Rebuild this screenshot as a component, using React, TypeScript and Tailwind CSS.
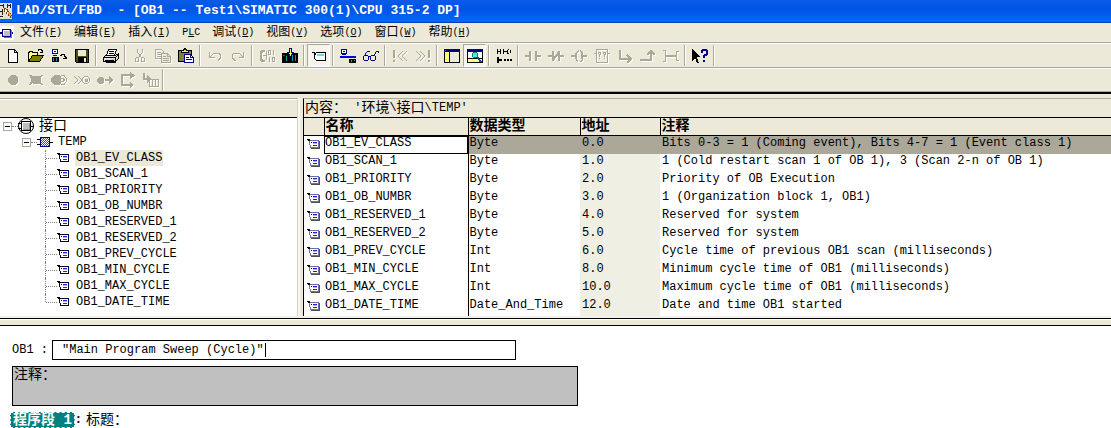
import type { ReactNode } from "react";
import clsx from "clsx";

const menus = [
  { label: "文件", mnemonic: "F" },
  { label: "编辑", mnemonic: "E" },
  { label: "插入", mnemonic: "I" },
  { label: "PLC" },
  { label: "调试", mnemonic: "D" },
  { label: "视图", mnemonic: "V" },
  { label: "选项", mnemonic: "O" },
  { label: "窗口", mnemonic: "W" },
  { label: "帮助", mnemonic: "H" },
];

const variables = [
  {
    name: "OB1_EV_CLASS",
    type: "Byte",
    address: "0.0",
    comment: "Bits 0-3 = 1 (Coming event), Bits 4-7 = 1 (Event class 1)",
  },
  {
    name: "OB1_SCAN_1",
    type: "Byte",
    address: "1.0",
    comment: "1 (Cold restart scan 1 of OB 1), 3 (Scan 2-n of OB 1)",
  },
  { name: "OB1_PRIORITY", type: "Byte", address: "2.0", comment: "Priority of OB Execution" },
  { name: "OB1_OB_NUMBR", type: "Byte", address: "3.0", comment: "1 (Organization block 1, OB1)" },
  { name: "OB1_RESERVED_1", type: "Byte", address: "4.0", comment: "Reserved for system" },
  { name: "OB1_RESERVED_2", type: "Byte", address: "5.0", comment: "Reserved for system" },
  {
    name: "OB1_PREV_CYCLE",
    type: "Int",
    address: "6.0",
    comment: "Cycle time of previous OB1 scan (milliseconds)",
  },
  {
    name: "OB1_MIN_CYCLE",
    type: "Int",
    address: "8.0",
    comment: "Minimum cycle time of OB1 (milliseconds)",
  },
  {
    name: "OB1_MAX_CYCLE",
    type: "Int",
    address: "10.0",
    comment: "Maximum cycle time of OB1 (milliseconds)",
  },
  {
    name: "OB1_DATE_TIME",
    type: "Date_And_Time",
    address: "12.0",
    comment: "Date and time OB1 started",
  },
];

type Tool = { label: string; icon: ReactNode; disabled?: boolean; pressed?: boolean };

const G = "#aca899";

// Icons are drawn on a 16x16 grid, one unit per pixel.
const mainTools: Tool[][] = [
  [
    {
      label: "新建",
      icon: (
        <>
          <path d="M3.5 1.5h6l3 3v10h-9z" fill="#fff" stroke="#000" />
          <path d="M9.5 1.5v3h3" fill="none" stroke="#000" />
        </>
      ),
    },
    {
      label: "打开",
      icon: (
        <>
          <path d="M.5 13.5v-9h1v-1h3v1h5v3" fill="#ffff80" stroke="#000" />
          <path d="M.5 13.5l4-6h11l-4 6z" fill="#808000" stroke="#000" />
          <path d="M9.500 2.500h1v-1h3v1h1v2M12 4.500h3" fill="none" stroke="#000" />
        </>
      ),
    },
    {
      label: "在线打开",
      icon: (
        <>
          <path d="M1 1h6v5H1z" fill="#0000c0" />
          <path d="M2 2h4v3H2z" fill="#fff" />
          <path d="M3 3h2v1H3zM2 7h4v1H2z" fill="#0000c0" />
          <path d="M1 9h7v5H1z" fill="#000" />
          <path d="M2 10h1v3H2zM5 10h1v3H5z" fill="#00a0a0" />
          <path d="M9 7.500h1.500v-1h3v1.500h1v3M12 10.500h4M14 9.500h2" fill="none" stroke="#000" />
        </>
      ),
    },
    {
      label: "保存",
      icon: (
        <>
          <path d="M1.500 1.500h13v13h-12l-1-1z" fill="#505000" stroke="#000" />
          <path d="M4 2h8v6H4z" fill="#ece9d8" />
          <path d="M4 9h9v5H4z" fill="#000" />
          <path d="M10 10h2v4h-2z" fill="#ece9d8" />
        </>
      ),
    },
  ],
  [
    {
      label: "打印",
      icon: (
        <>
          <path d="M5.500 1.500h8l-2 6h-8z" fill="#fff" stroke="#000" />
          <path d="M6 3.500h5M5.500 5.500h5" stroke="#000" />
          <path d="M2.500 7.500h10l3-2v5l-3 3h-12v-4z" fill="#e0e0e0" stroke="#000" />
          <path d="M.5 9.500h12v4M12.500 9.500l3-3M2 12.500h9" fill="none" stroke="#000" />
          <path d="M8 11h3v1H8z" fill="#e0e000" />
          <path d="M2.500 14.500h10" stroke="#000" />
        </>
      ),
    },
  ],
  [
    {
      label: "剪切",
      disabled: true,
      icon: (
        <g fill="none" stroke={G}>
          <path d="M5.500 1v3l4 6M10.500 1v3l-4 6" />
          <path d="M4.500 9.500h2v4h-3v-3zM9.500 9.500h2l1 1v3h-3z" />
        </g>
      ),
    },
    {
      label: "复制",
      disabled: true,
      icon: (
        <g fill="none" stroke={G}>
          <path d="M.5 1.500h6l2 2v7h-8zM2 4.500h4M2 6.500h4M2 8.500h4" />
          <path d="M6.500 5.500h6l3 3v6h-9z" fill="#ece9d8" />
          <path d="M8 8.500h3M8 10.500h6M8 12.500h6M12.500 5.500v3h3" />
        </g>
      ),
    },
    {
      label: "粘贴",
      icon: (
        <>
          <path d="M.5 2.500h13v11H.5z" fill="#808040" stroke="#000" />
          <path d="M3.500 4.500v-2h2l1-2h1l1 2h2v2z" fill="#e8e080" stroke="#000" />
          <path d="M6.500 6.500h6l3 3v5h-9z" fill="#fff" stroke="#000080" />
          <path d="M8 9.500h3M8 11.500h6M12.500 6.500v3h3" fill="none" stroke="#000080" />
        </>
      ),
    },
  ],
  [
    {
      label: "撤消",
      disabled: true,
      icon: (
        <path d="M2.500 4v5.500h5M3 9l4-4h5l1.500 2v3l-2 2h-1" fill="none" stroke={G} />
      ),
    },
    {
      label: "重做",
      disabled: true,
      icon: (
        <path d="M13.500 4v5.500h-5M13 9L9 5H4L2.500 7v3l2 2h1" fill="none" stroke={G} />
      ),
    },
  ],
  [
    {
      label: "比较",
      disabled: true,
      icon: (
        <g fill="none" stroke={G}>
          <path d="M6 3H3v1H2v8h1v1h3" strokeWidth="2" />
          <path d="M4 7.500h4M7.500 3v9" />
          <path d="M9.500 2.500h2v4h-2zM14.500 2v5M10.500 9v5M13.500 9.500h2v4h-2z" />
        </g>
      ),
    },
    {
      label: "下载",
      icon: (
        <>
          <path d="M0 5h16v10H0z" fill="#000" />
          <path d="M1 7h2v1H1z" fill="#f00" />
          <path d="M4 8h1v5H4zM10 7h1v6h-1zM13 7h1v6h-1z" fill="#00a0a0" />
          <path d="M7.500.5h2v4h2l-3 4-3-4h2z" fill="#ffff40" stroke="#000080" />
        </>
      ),
    },
  ],
  [
    {
      label: "符号表示",
      pressed: true,
      icon: (
        <>
          <path d="M1 4.500h2l2 2M5.500 4.500h9v8h-9l-2-2v-4z" fill="#fff" stroke="#000" />
          <path d="M6 6h7v2H6z" fill="#60e0e0" />
        </>
      ),
    },
  ],
  [
    {
      label: "在线",
      icon: (
        <>
          <path d="M1.500 1.500h5v4h-5z" fill="#fff" stroke="#000080" />
          <path d="M3 3h2v1H3z" fill="#0000c0" />
          <path d="M2 6h4v1H2z" fill="#000080" />
          <path d="M0 8h16v2H0z" fill="#0000e0" />
          <path d="M9 11h7v4H9z" fill="#000" />
          <path d="M11 12h1v2h-1zM14 12h1v1h-1z" fill="#00b0a0" />
        </>
      ),
    },
    {
      label: "监视",
      icon: (
        <g fill="none" stroke="#000080">
          <path d="M1.500 7.500h3l1 1v3l-1 1h-3l-1-1v-3zM8.500 7.500h3l1 1v3l-1 1h-3l-1-1v-3z" />
          <path d="M5.500 8.500h2M2.500 7V5.500l3-2.500h1M11.500 7l2-4h1.500v2" />
        </g>
      ),
    },
  ],
  [
    {
      label: "上一个错误",
      disabled: true,
      icon: (
        <g fill="none" stroke={G}>
          <path d="M2 2v8M2 12v2" strokeWidth="2" />
          <path d="M11 3L6 8l5 5M15 3l-5 5 5 5" />
        </g>
      ),
    },
    {
      label: "下一个错误",
      disabled: true,
      icon: (
        <g fill="none" stroke={G}>
          <path d="M14 2v8M14 12v2" strokeWidth="2" />
          <path d="M5 3l5 5-5 5M1 3l5 5-5 5" />
        </g>
      ),
    },
  ],
  [
    {
      label: "总览",
      icon: (
        <>
          <path d="M.5 1.500h15v13H.5z" fill="#ece9d8" stroke="#000" />
          <path d="M0 1h16v3H0z" fill="#000080" />
          <path d="M1 4h4v10H1z" fill="#ffff80" />
          <path d="M5 4h1v10H5z" fill="#000" />
          <path d="M1 2h1v1H1z" fill="#f00" />
        </>
      ),
    },
    {
      label: "详细资料",
      pressed: true,
      icon: (
        <>
          <path d="M.5 1.500h15v13H.5z" fill="#fff" stroke="#000" />
          <path d="M0 1h16v3H0z" fill="#000080" />
          <path d="M1 11h14v3H1z" fill="#ffff80" />
          <path d="M1 10h14v1H1z" fill="#000" />
          <path d="M6.500 4.500h3l1 1v3l-1 1h-3l-1-1v-3z" fill="#60e0e0" stroke="#008080" />
          <path d="M10 9l4 5" stroke="#0040c0" strokeWidth="2" />
        </>
      ),
    },
  ],
  [
    {
      label: "新程序段",
      icon: (
        <g fill="none" stroke="#000">
          <path d="M1.500 1v5M1 3.500h4M4.500 1v5M7.500 1v5M7 3.500h4M11.500 1.500v4M12 1.500h1M12 5.500h1M14.500 2v3" />
          <path d="M2 9v6M1 12h5" strokeWidth="2" />
          <path d="M8 12h2M11 12h2M14 12h2" strokeWidth="2" />
        </g>
      ),
    },
  ],
  [
    {
      label: "常开触点",
      disabled: true,
      icon: (
        <path d="M0 8h5M5 3v10M11 3v10M11 8h5" fill="none" stroke={G} strokeWidth="2" />
      ),
    },
    {
      label: "常闭触点",
      disabled: true,
      icon: (
        <path d="M0 8h5M5 3v10M11 3v10M11 8h5M5 12l6-8" fill="none" stroke={G} strokeWidth="2" />
      ),
    },
    {
      label: "线圈",
      disabled: true,
      icon: (
        <g fill="none" stroke={G}>
          <path d="M0 8h4M12 8h4" strokeWidth="2" />
          <path d="M7 2v1H6v1H5v8h1v1h1M9 2v1h1v1h1v8h-1v1H9" />
          <path d="M5 5v6M11 5v6" strokeWidth="2" />
        </g>
      ),
    },
    {
      label: "空框",
      disabled: true,
      icon: (
        <g fill="none" stroke={G}>
          <path d="M2.500 1.500h11v13h-11zM0 5.500h2M14 5.500h2" />
          <path d="M4.500 6v-1.500h2v2h-1V9M5 10.500h1M9.500 6v-1.500h2v2h-1V9M10 10.500h1" />
        </g>
      ),
    },
    {
      label: "打开分支",
      disabled: true,
      icon: (
        <g fill="none" stroke={G}>
          <path d="M3 2v9h10" strokeWidth="2" />
          <path d="M10 7l4 4-4 4" strokeWidth="2" />
        </g>
      ),
    },
    {
      label: "关闭分支",
      disabled: true,
      icon: (
        <g fill="none" stroke={G}>
          <path d="M0 12h11V4" strokeWidth="2" />
          <path d="M7 7l4-4 4 4" strokeWidth="2" />
        </g>
      ),
    },
    {
      label: "连接",
      disabled: true,
      icon: (
        <g fill="none" stroke={G}>
          <path d="M0 2.500h2.500v11H0M16 3.500h-2.500v9H16" />
          <path d="M3 8h10" strokeWidth="2" />
        </g>
      ),
    },
  ],
  [
    {
      label: "帮助",
      icon: (
        <>
          <path d="M0 1v12l3-3 2 5h2L5 9h4z" fill="#000" />
          <path d="M10 5V3l1-1h3l1 1v3l-3 2v2M12 12v2" fill="none" stroke="#000080" strokeWidth="2" />
        </>
      ),
    },
  ],
];

const debugTools: Tool[] = [
  {
    label: "设置断点",
    disabled: true,
    icon: <path d="M6 3h4l3 3v4l-3 3H6l-3-3V6z" fill={G} />,
  },
  {
    label: "删除断点",
    disabled: true,
    icon: (
      <g fill={G}>
        <path d="M5 4h6l2 2v4l-2 2H5l-2-2V6z" />
        <path d="M1 3h2l4 4-4 6H1l3-5zM15 3h-2L9 7l4 6h2l-3-5z" />
      </g>
    ),
  },
  {
    label: "激活断点",
    disabled: true,
    icon: (
      <g fill={G}>
        <path d="M3 3h5l2 2v6l-2 2H3l-3-3V6z" />
        <path d="M10 3.500h3l2.500 3v3l-2.500 3h-3M10 6.500h2l1 1v1l-1 1h-2" fill="none" stroke={G} />
      </g>
    ),
  },
  {
    label: "下一个断点",
    disabled: true,
    icon: (
      <g fill="none" stroke={G}>
        <path d="M0 4l4 4-4 4M4 4l4 4-4 4M10.500 4.500h3l2 2v3l-2 2h-3l-2-2v-3z" />
        <path d="M11 7h2v2h-2z" fill={G} />
      </g>
    ),
  },
  {
    label: "继续",
    disabled: true,
    icon: (
      <g fill={G}>
        <path d="M2 5h3l2 2v3l-2 2H2l-2-2V7z" />
        <path d="M8 7h4V4l4 4-4 4V9H8z" />
      </g>
    ),
  },
  {
    label: "下一语句",
    disabled: true,
    icon: (
      <g fill={G}>
        <path d="M1 2h9V0l5 3.500L10 7V4H3v8h7v-2l4 3-4 3v-2H1z" />
      </g>
    ),
  },
  {
    label: "执行调用",
    disabled: true,
    icon: (
      <g fill="none" stroke={G}>
        <path d="M1 1v6h4" strokeWidth="2" />
        <path d="M4 3l4 4-4 4z" fill={G} />
        <path d="M6.500 7.500h9v7h-9zM9.500 7v7M12.500 7v7" />
      </g>
    ),
  },
];

function ToolButton({ label, icon, disabled, pressed }: Tool) {
  return (
    <button
      type="button"
      aria-label={label}
      aria-pressed={pressed}
      disabled={disabled}
      className={clsx(
        "flex h-[23px] w-[23px] flex-none items-center justify-center",
        pressed && "border border-[#aca899] border-r-white border-b-white bg-[#f6f4ec]",
      )}
    >
      <svg
        viewBox="0 0 16 16"
        shapeRendering="crispEdges"
        className={clsx("h-4 w-4 flex-none", disabled && "drop-shadow-[1px_1px_0_#fff]")}
      >
        {icon}
      </svg>
    </button>
  );
}

function Separator() {
  return <div className="mx-[2px] h-[21px] w-[2px] flex-none border-r border-l border-l-[#aca899] border-r-white" />;
}

function Zh({ children }: { children: ReactNode }) {
  return <span className="text-[14px]">{children}</span>;
}

function VariableIcon({ shaded = false }: { shaded?: boolean }) {
  return (
    <svg viewBox="0 0 14 12" shapeRendering="crispEdges" className="block h-3 w-[14px] flex-none">
      {shaded && <path d="M4 10h8V3h1v8H4z" fill="#505050" />}
      <path d="M0 1h3v1H0zM1 2h2v1H1z" fill="#000" />
      <path
        d="M3.500 2.500h8v7h-8v-2l-1-1v-3z"
        fill="#fff"
        stroke={shaded ? "#7070a8" : "#000040"}
      />
      <path d="M6 4h4v1H6zM6 7h4v1H6z" fill="#2020e0" />
      <path d="M6 5h4v1H6z" fill="#b0b0f0" />
      <path d="M4 4h1v1H4z" fill="#000" />
    </svg>
  );
}

function BlockIcon() {
  return (
    <svg viewBox="0 0 16 16" className="h-4 w-4 flex-none">
      <circle cx="8" cy="8" r="7.500" fill="#fff" stroke="#000" />
      <g shapeRendering="crispEdges">
        <path d="M0 5.500h4M0 10.500h4M12 8.500h4" stroke="#000" />
        <path d="M3 3h10v10H3z" fill="#000" />
        <path d="M4 4h8v8H4z" fill="#fff" />
        <path d="M5 5h7v7H5z" fill="#909090" />
        <path d="M5 5h6v6H5z" fill="#c0c0c0" />
      </g>
    </svg>
  );
}

function TempIcon() {
  return (
    <svg viewBox="0 0 16 16" shapeRendering="crispEdges" className="h-4 w-4 flex-none">
      <path d="M0 5.500h3M0 10.500h3M13 8.500h3" stroke="#000" />
      <path d="M3.500 3.500h9v9h-9z" fill="#fff" stroke="#000080" />
      <path d="M4 4.500h8M4 6.500h8M4 8.500h8M4 10.500h8" stroke="#4040c0" strokeDasharray="1 1" />
      <path d="M5 5.500h7M5 7.500h7M5 9.500h7M5 11.500h7" stroke="#4040c0" strokeDasharray="1 1" />
    </svg>
  );
}

function Collapse({ label }: { label: string }) {
  return (
    <button
      type="button"
      aria-label={label}
      className="flex h-[9px] w-[9px] flex-none items-center justify-center border border-[#aca899] bg-white"
    >
      <span className="h-px w-[5px] bg-black" />
    </button>
  );
}

function TitleBar() {
  return (
    <header className="flex h-[23px] items-center border-b border-[#0040b0] bg-linear-to-b from-[#0a5be8] via-[#0054e3] via-40% to-[#0068ff]">
      <svg viewBox="0 0 13 16" shapeRendering="crispEdges" className="h-4 w-[13px] flex-none">
        <path d="M0 0h12v16H0z" fill="#e4e0d4" />
        <path d="M0 2.500h3M3.500 1v4M7.500 1v4M8 2.500h2M10.500 1v4M0 8.500h2M2.500 6v6M0 13.500h3" stroke="#202020" />
        <path d="M4 5h2v1h2v2h1v2h2v2h1v3h-2v-2H8v-2H6V9H4z" fill="#6b3a10" />
        <path d="M5 6h1v1h1v2h1v2H7V9H5z" fill="#fff" />
        <path d="M8 9h2v2h1v2h1v2h-1v-2H9v-2H8z" fill="#f0a830" />
      </svg>
      <h1 className="ml-[3px] text-[13px] leading-4 font-bold whitespace-pre text-white">
        {"LAD/STL/FBD  - [OB1 -- Test1\\SIMATIC 300(1)\\CPU 315-2 DP]"}
      </h1>
    </header>
  );
}

function MenuBar() {
  return (
    <nav className="flex h-5 items-center border-b border-[#aca899]">
      <svg viewBox="0 0 14 14" shapeRendering="crispEdges" className="h-[14px] w-[14px] flex-none">
        <path d="M0 0h14v14H0z" fill="#fff" />
        <path d="M0 6h13v2H0z" fill="#000080" />
        <path d="M2.500 3.500h8v7h-8z" fill="#c0c0c0" stroke="#000080" />
        <path d="M3 4h6v1H4v4H3z" fill="#fff" />
        <path d="M11 4h1v8H4v-1h7z" fill="#808080" />
      </svg>
      <div className="ml-[6px] flex items-center gap-3">
        {menus.map(({ label, mnemonic }) => (
          <button key={label} type="button" className="flex items-center leading-4 whitespace-nowrap">
            {mnemonic ? (
              <>
                <span className="text-[12px]">{label}</span>
                <span className="text-[10px]">
                  (<u>{mnemonic}</u>)
                </span>
              </>
            ) : (
              <span className="text-[10px]">
                P<u>L</u>C
              </span>
            )}
          </button>
        ))}
      </div>
    </nav>
  );
}

function Toolbars() {
  return (
    <>
      <div className="flex h-[25px] items-center border-t border-b border-t-white border-b-[#aca899] pl-px">
        {mainTools.map((group, index) => (
          <div key={index} className="flex items-center">
            {group.map((tool) => (
              <ToolButton key={tool.label} {...tool} />
            ))}
            <Separator />
          </div>
        ))}
      </div>
      <div className="flex h-6 items-center border-t border-b border-t-white border-b-[#aca899] pl-px">
        {debugTools.map((tool) => (
          <ToolButton key={tool.label} {...tool} />
        ))}
        <div className="h-full w-[2px] border-r border-l border-l-[#aca899] border-r-white" />
      </div>
    </>
  );
}

function InterfaceTree() {
  return (
    <ul className="flex-1 bg-white leading-4">
      <li>
        <div className="flex h-4 items-center pl-[3px]">
          <Collapse label="折叠接口" />
          <span className="w-[6px] border-t border-dotted border-[#808080]" />
          <BlockIcon />
          <span className="ml-[5px] flex">
            <Zh>接口</Zh>
          </span>
        </div>
        <ul>
          <li>
            <div className="flex h-4 items-center pl-[22px]">
              <Collapse label="折叠 TEMP" />
              <span className="w-[6px] border-t border-dotted border-[#808080]" />
              <TempIcon />
              <span className="ml-[5px]">TEMP</span>
            </div>
            <ul>
              {variables.map(({ name }, index) => (
                <li key={name} className="flex h-4 items-center pl-[45px]">
                  <span
                    className={clsx(
                      "border-l border-dotted border-[#808080]",
                      index === variables.length - 1 ? "h-2 self-start" : "h-4",
                    )}
                  />
                  <span className="w-[11px] border-t border-dotted border-[#808080]" />
                  <VariableIcon />
                  <span className={clsx("ml-1 px-px", index === 0 && "bg-[#ece9d8]")}>{name}</span>
                </li>
              ))}
            </ul>
          </li>
        </ul>
      </li>
    </ul>
  );
}

function VariableTable() {
  return (
    <table className="w-full table-fixed border-collapse bg-white text-left leading-[14px]">
      <colgroup>
        <col className="w-[20px]" />
        <col className="w-[144px]" />
        <col className="w-[112px]" />
        <col className="w-[80px]" />
        <col />
      </colgroup>
      <thead className="bg-[#ece9d8] text-[14px] leading-4">
        <tr className="h-[17px] border-b border-black">
          <th aria-label="图标" className="border-r border-black p-0" />
          <th className="border-r border-black py-0 pl-px">名称</th>
          <th className="border-r border-black py-0 pl-px">数据类型</th>
          <th className="border-r border-black py-0 pl-px">地址</th>
          <th className="py-0 pl-px">注释</th>
        </tr>
      </thead>
      <tbody>
        {variables.map(({ name, type, address, comment }, index) => {
          const selected = index === 0;
          return (
            <tr key={name} className={clsx("h-[18px]", selected && "bg-[#aca899]")}>
              <td className="bg-white pt-0 pb-[2px] pl-[3px]">
                <VariableIcon shaded />
              </td>
              <td className="border-r border-black bg-white p-0">
                {selected ? (
                  <input
                    aria-label="名称"
                    defaultValue={name}
                    className="block h-[18px] w-full border border-black bg-white pb-[4px] outline-none"
                  />
                ) : (
                  <span className="block pb-[4px] pl-px">{name}</span>
                )}
              </td>
              <td className="pt-0 pb-[4px] pl-px">{type}</td>
              <td className={clsx("pt-0 pb-[4px] pl-[2px]", !selected && "bg-[#f0efe3]")}>{address}</td>
              <td className="pt-0 pb-[4px] pl-[2px] whitespace-nowrap">{comment}</td>
            </tr>
          );
        })}
      </tbody>
    </table>
  );
}

function BlockEditor() {
  return (
    <main className="bg-white pt-[14px] pl-3">
      <div className="flex items-center">
        <label htmlFor="block-title" className="w-10 whitespace-pre">
          OB1 :
        </label>
        <div className="relative w-[464px]">
          <input
            id="block-title"
            defaultValue={'"Main Program Sweep (Cycle)"'}
            className="block h-5 w-full border border-black bg-white pl-[9px] outline-none"
          />
          <span className="absolute top-[3px] left-[213px] h-[14px] w-px bg-black" />
        </div>
      </div>
      <textarea
        aria-label="注释"
        defaultValue="注释："
        className="mt-[6px] block h-10 w-[566px] resize-none border border-black bg-[#c0c0c0] pl-px text-[14px] leading-4 outline-none"
      />
      <div className="mt-[6px] -ml-[2px] flex h-4 items-center leading-4">
        <button
          type="button"
          className="flex h-4 items-center border border-dashed border-white bg-[#008080] px-[2px] text-[14px] font-bold whitespace-pre text-white"
        >
          {"程序段 1"}
        </button>
        <span className="font-bold">:</span>
        <span className="ml-[4px] text-[14px]">标题：</span>
      </div>
    </main>
  );
}

export default function App() {
  return (
    <div className="min-h-screen overflow-hidden bg-white font-['Liberation_Mono','Noto_Sans_CJK_SC',monospace] text-[12px] leading-4 text-black">
      <div className="bg-[#ece9d8]">
        <TitleBar />
        <MenuBar />
        <Toolbars />
        <div className="h-[6px] border-t-2 border-black" />
        <div className="flex">
          <section className="flex w-[298px] flex-none flex-col border-t border-r border-t-[#aca899] border-r-[#d8d4c4]">
            <div className="h-[19px] border-t border-b border-t-white border-b-black" />
            <InterfaceTree />
          </section>
          <div className="w-[5px] flex-none border-l-2 border-[#f8f7f2]" />
          <section className="min-w-0 flex-1 border-t border-l border-t-[#aca899] border-l-black">
            <h2 className="flex h-[19px] items-center border-b border-black pl-px whitespace-pre">
              <Zh>内容：</Zh>
              {" '"}
              <Zh>环境</Zh>
              {"\\"}
              <Zh>接口</Zh>
              {"\\TEMP'"}
            </h2>
            <VariableTable />
          </section>
        </div>
        <div className="h-[3px] border-b border-black bg-[#f4f2e8]" />
        <div className="h-[7px] border-t border-b border-t-white border-b-black" />
      </div>
      <BlockEditor />
    </div>
  );
}
